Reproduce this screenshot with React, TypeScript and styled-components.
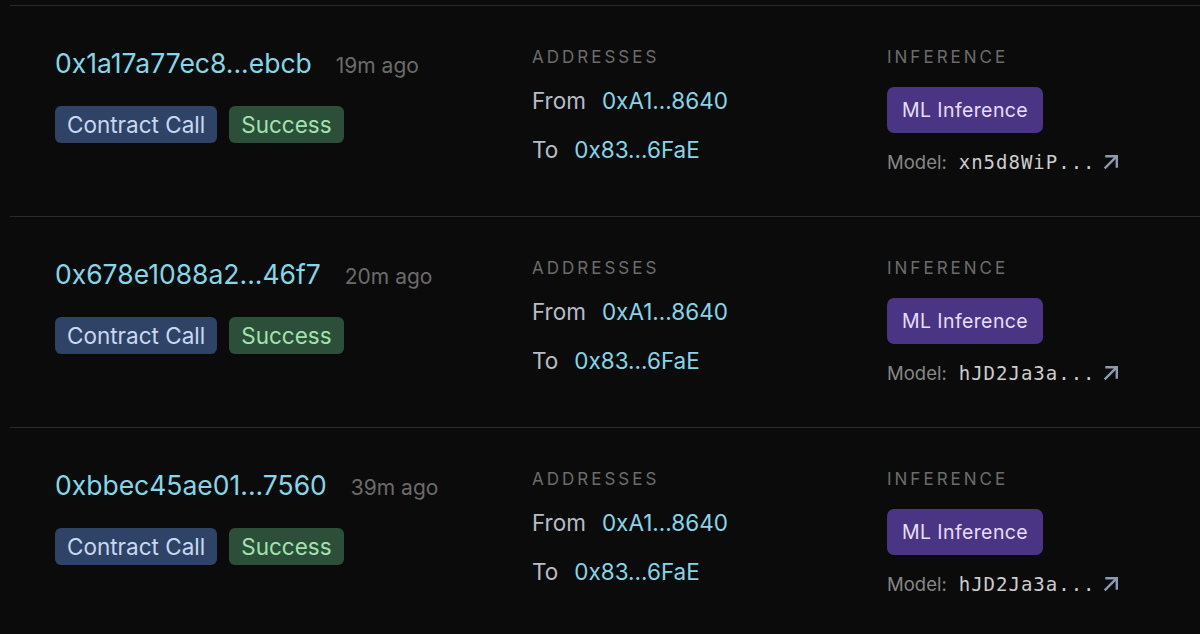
import React from 'react'
import styled, { createGlobalStyle } from 'styled-components'

interface Tx {
    hash: string,
    age: string,
    from: string,
    to: string,
    model: string
}

const txs: Tx[] = [
    { hash: '0x1a17a77ec8...ebcb', age: '19m ago', from: '0xA1...8640', to: '0x83...6FaE', model: 'xn5d8WiP...' },
    { hash: '0x678e1088a2...46f7', age: '20m ago', from: '0xA1...8640', to: '0x83...6FaE', model: 'hJD2Ja3a...' },
    { hash: '0xbbec45ae01...7560', age: '39m ago', from: '0xA1...8640', to: '0x83...6FaE', model: 'hJD2Ja3a...' },
]

const GlobalStyle = createGlobalStyle`
    html, body {
        margin: 0;
        padding: 0;
        background: #0b0b0b;
        font-family: Inter, "Noto Sans", sans-serif;
    }
`

const List = styled.div`
    padding: 5px 0 0 10px;
    background: #0b0b0b;
    min-height: 634px;
    box-sizing: border-box;
`

const Row = styled.div`
    display: grid;
    grid-template-columns: 477px 355px 1fr;
    align-items: start;
    height: 211px;
    box-sizing: border-box;
    border-top: 1.5px solid #2b2b2b;
    padding: 41px 0 0 45px;
`

const HashLine = styled.div`
    display: flex;
    align-items: baseline;
    gap: 24px;
    height: 32px;
    line-height: 32px;
`

const Hash = styled.span`
    font-size: 26.5px;
    color: #84d6e8;
`

const Age = styled.span`
    font-size: 21px;
    color: #6b6b6b;
`

const Badges = styled.div`
    display: flex;
    gap: 12px;
    margin-top: 27px;
`

const Badge = styled.span<{ $bg: string, $fg: string }>`
    display: inline-flex;
    align-items: center;
    height: 37px;
    padding: 0 12px;
    border-radius: 6px;
    font-size: 22.5px;
    background: ${p => p.$bg};
    color: ${p => p.$fg};
`

const Label = styled.div`
    font-size: 17px;
    line-height: 20px;
    letter-spacing: 3px;
    color: #6c6c6c;
    text-transform: uppercase;
`

const AddrLine = styled.div<{ $top: number }>`
    display: flex;
    gap: 16px;
    font-size: 22.5px;
    line-height: 28px;
    margin-top: ${p => p.$top}px;
`

const AddrKey = styled.span`
    color: #b7bdc7;
`

const AddrVal = styled.span`
    color: #84d6e8;
`

const MlBadge = styled.span`
    display: inline-flex;
    align-items: center;
    height: 46px;
    margin-top: 20px;
    padding: 0 15px;
    border-radius: 7px;
    background: #4a3585;
    color: #e6ddff;
    font-size: 19.5px;
    letter-spacing: 0.4px;
`

const ModelLine = styled.div`
    display: flex;
    align-items: center;
    margin-top: 16px;
    line-height: 26px;
    font-size: 18.5px;
`

const ModelKey = styled.span`
    color: #878787;
    margin-right: 12px;
`

const ModelVal = styled.span`
    font-family: "DejaVu Sans Mono", "Liberation Mono", monospace;
    font-size: 19px;
    letter-spacing: 1px;
    color: #cdcdcd;
    margin-right: 7px;
`

const ExternalIcon = styled.svg`
    width: 16px;
    height: 16px;
    flex-shrink: 0;
`

const App: React.FC = () => {
    return (
        <>
            <GlobalStyle />
            <List>
                {txs.map((tx, i) => (
                    <Row key={i}>
                        <div>
                            <HashLine>
                                <Hash>{tx.hash}</Hash>
                                <Age>{tx.age}</Age>
                            </HashLine>
                            <Badges>
                                <Badge $bg='#2f4367' $fg='#c9d8f2'>Contract Call</Badge>
                                <Badge $bg='#2c4f39' $fg='#a2e2ad'>Success</Badge>
                            </Badges>
                        </div>
                        <div>
                            <Label>Addresses</Label>
                            <AddrLine $top={20}>
                                <AddrKey>From</AddrKey>
                                <AddrVal>{tx.from}</AddrVal>
                            </AddrLine>
                            <AddrLine $top={21}>
                                <AddrKey>To</AddrKey>
                                <AddrVal>{tx.to}</AddrVal>
                            </AddrLine>
                        </div>
                        <div>
                            <Label>Inference</Label>
                            <MlBadge>ML Inference</MlBadge>
                            <ModelLine>
                                <ModelKey>Model:</ModelKey>
                                <ModelVal>{tx.model}</ModelVal>
                                <ExternalIcon viewBox='0 0 16 16' fill='none' stroke='#8c9bb3' strokeWidth='2.4' strokeLinecap='square'>
                                    <path d='M2.5 13.5 13 3' />
                                    <path d='M3.5 2.2h10.3v10.3' />
                                </ExternalIcon>
                            </ModelLine>
                        </div>
                    </Row>
                ))}
            </List>
        </>
    )
}

export default App
